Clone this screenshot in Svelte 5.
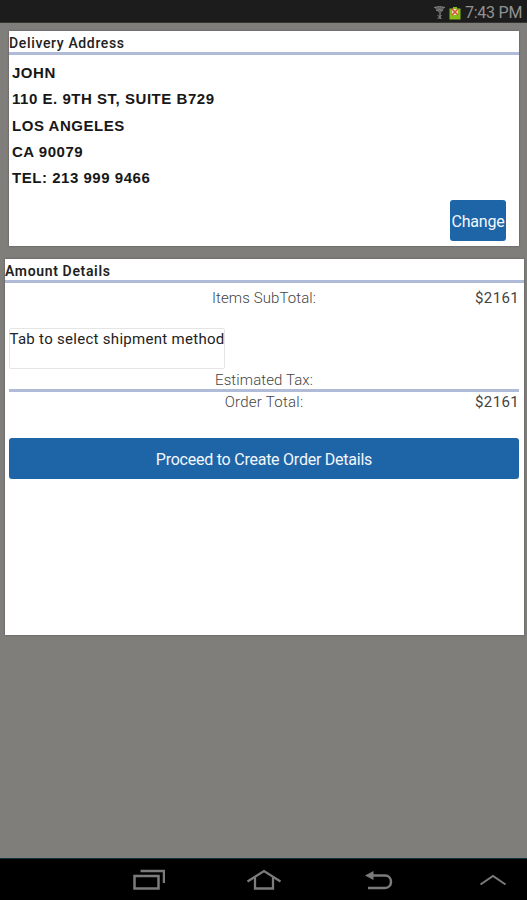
<script>
  const address = ['JOHN', '110 E. 9TH ST, SUITE B729', 'LOS ANGELES', 'CA 90079', 'TEL: 213 999 9466'];
  const total = '$2161';
</script>

<div class="screen">
  <header class="status-bar">
    <svg class="wifi" width="13" height="16" viewBox="0 0 13 16">
      <path d="M1 2h11L8 8v6H6V8z" fill="#5c5c5c" />
      <path d="M1 2.5q5.5-2 11 0M3 5.5q3.500-1.500 7 0M4.500 10l4 4m0-4l-4 4" fill="none" stroke="#858585" />
    </svg>
    <svg class="battery" width="12" height="14" viewBox="0 0 12 14">
      <path d="M.5 2.500H4V1h4v1.500h3.500V13.500H.5z" fill="#86bd18" />
      <path d="M3 3h6v6H3z" fill="#e9dfb0" />
      <path d="M3 3l6 6m0-6l-6 6" stroke="#d9503c" stroke-width="1.500" />
    </svg>
    <span class="clock">7:43 PM</span>
  </header>

  <main>
    <section class="card delivery">
      <h2 class="delivery-title">Delivery Address</h2>
      <div class="address">
        {#each address as line}
          <div>{line}</div>
        {/each}
      </div>
      <button class="change">Change</button>
    </section>

    <section class="card amount">
      <h2 class="amount-title">Amount Details</h2>
      <div class="amount-body">
        <div class="row">
          <span class="label label--items">Items SubTotal:</span>
          <span class="price">{total}</span>
        </div>
        <div class="shipment">Tab to select shipment method</div>
        <div class="row row--tax">
          <span class="label label--tax">Estimated Tax:</span>
        </div>
        <div class="row">
          <span class="label label--total">Order Total:</span>
          <span class="price">{total}</span>
        </div>
        <button class="proceed">Proceed to Create Order Details</button>
      </div>
    </section>
  </main>

  <nav>
    <svg width="33" height="24" viewBox="0 0 33 24" fill="none" stroke="#7b7b7b" stroke-width="2.500">
      <path d="M2.500 8h24v12.500h-24zM8.500 3H32v12" />
    </svg>
    <svg width="36" height="24" viewBox="0 0 36 24" fill="none" stroke="#7b7b7b" stroke-width="2.300">
      <path d="M1.500 13.500L18 3l16.500 10.500M9 9.500v11h18v-11" />
    </svg>
    <svg width="30" height="24" viewBox="0 0 30 24" fill="none" stroke="#7b7b7b" stroke-width="2.500">
      <path d="M8 7.500h13c8 0 8 12.500 0 12.500H4" />
      <path d="M1 7.500l8.500-4.500v9z" fill="#7b7b7b" stroke="none" />
    </svg>
    <svg width="28" height="24" viewBox="0 0 28 24" fill="none" stroke="#7b7b7b" stroke-width="2">
      <path d="M1.500 16.500L14 8l12.500 8.500" />
    </svg>
  </nav>
</div>

<style>
  :global(body) {
    margin: 0;
    background: #807e7b;
  }

  .screen {
    display: flex;
    flex-direction: column;
    width: 527px;
    height: 900px;
    overflow: hidden;
    background: #807e7b;
    color: #222;
    font-family: Roboto, sans-serif;
    font-size: 15px;
  }

  .status-bar {
    display: flex;
    align-items: center;
    justify-content: flex-end;
    box-sizing: border-box;
    height: 23px;
    padding: 3px 5px 0 0;
    background: #1c1c1c;
    border-bottom: 1px solid #343332;
  }

  .wifi {
    margin-right: 3px;
  }

  .battery {
    margin-right: 4px;
  }

  .clock {
    width: 57px;
    color: #929292;
    font-size: 16px;
    line-height: 20px;
    letter-spacing: -0.25px;
    white-space: nowrap;
  }

  main {
    flex: 1;
    padding-top: 8px;
  }

  .card {
    box-sizing: border-box;
    background: #fff;
    box-shadow: 0 0 2px #555;
  }

  .delivery {
    display: flex;
    flex-direction: column;
    height: 215px;
    margin: 0 8px 13px 9px;
  }

  .amount {
    height: 376px;
    margin: 0 3px 0 5px;
  }

  h2 {
    box-sizing: border-box;
    height: 24px;
    margin: 0;
    border-bottom: 3px solid #b0bbd7;
    font-size: 14px;
    font-weight: 500;
    line-height: 24px;
    white-space: nowrap;
  }

  .delivery-title {
    letter-spacing: 0.65px;
  }

  .amount-title {
    font-weight: 600;
    letter-spacing: 0.65px;
  }

  .address {
    padding: 5px 3px 0;
    color: #171717;
    font-family: 'Liberation Sans', Arial, sans-serif;
    font-size: 15px;
    font-weight: 700;
    line-height: 26.3px;
    letter-spacing: 0.53px;
  }

  button {
    border: 0;
    padding: 2px 0 0;
    border-radius: 3px;
    background: #1e65a8;
    color: #f3f7fc;
    font-family: Roboto, sans-serif;
    font-size: 16px;
    white-space: nowrap;
  }

  .change {
    align-self: flex-end;
    width: 56px;
    height: 41px;
    margin: auto 13px 5px 0;
    letter-spacing: -0.2px;
  }

  .amount-body {
    padding: 5px 5px 0 4px;
  }

  .row {
    display: grid;
    grid-template-columns: 1fr 44px;
    height: 21px;
    line-height: 21px;
    color: #444;
  }

  .label {
    justify-self: center;
    margin-left: 44px;
    font-weight: 300;
    white-space: nowrap;
  }

  .label--items {
    letter-spacing: 0.1px;
  }

  .label--tax {
    letter-spacing: 0.1px;
  }

  .label--total {
    letter-spacing: 0.25px;
  }

  .price {
    text-align: right;
    letter-spacing: 0.4px;
  }

  .shipment {
    box-sizing: border-box;
    width: 216px;
    height: 41px;
    margin: 19px 0 1px;
    border: 1px solid #e5e5e5;
    border-radius: 2px;
    text-indent: -0.5px;
    line-height: 20px;
    letter-spacing: 0.29px;
    white-space: nowrap;
  }

  .row--tax {
    height: 19px;
    border-bottom: 3px solid #b0bbd7;
  }

  .proceed {
    display: block;
    width: 100%;
    height: 41px;
    margin-top: 25px;
    letter-spacing: -0.24px;
  }

  nav {
    display: grid;
    grid-template-columns: 115px 115px 115px 114px;
    justify-content: end;
    justify-items: center;
    align-items: center;
    box-sizing: border-box;
    height: 42px;
    margin-right: -23px;
    padding-top: 1px;
    background: #000;
    border-top: 1px solid #123440;
  }
</style>
